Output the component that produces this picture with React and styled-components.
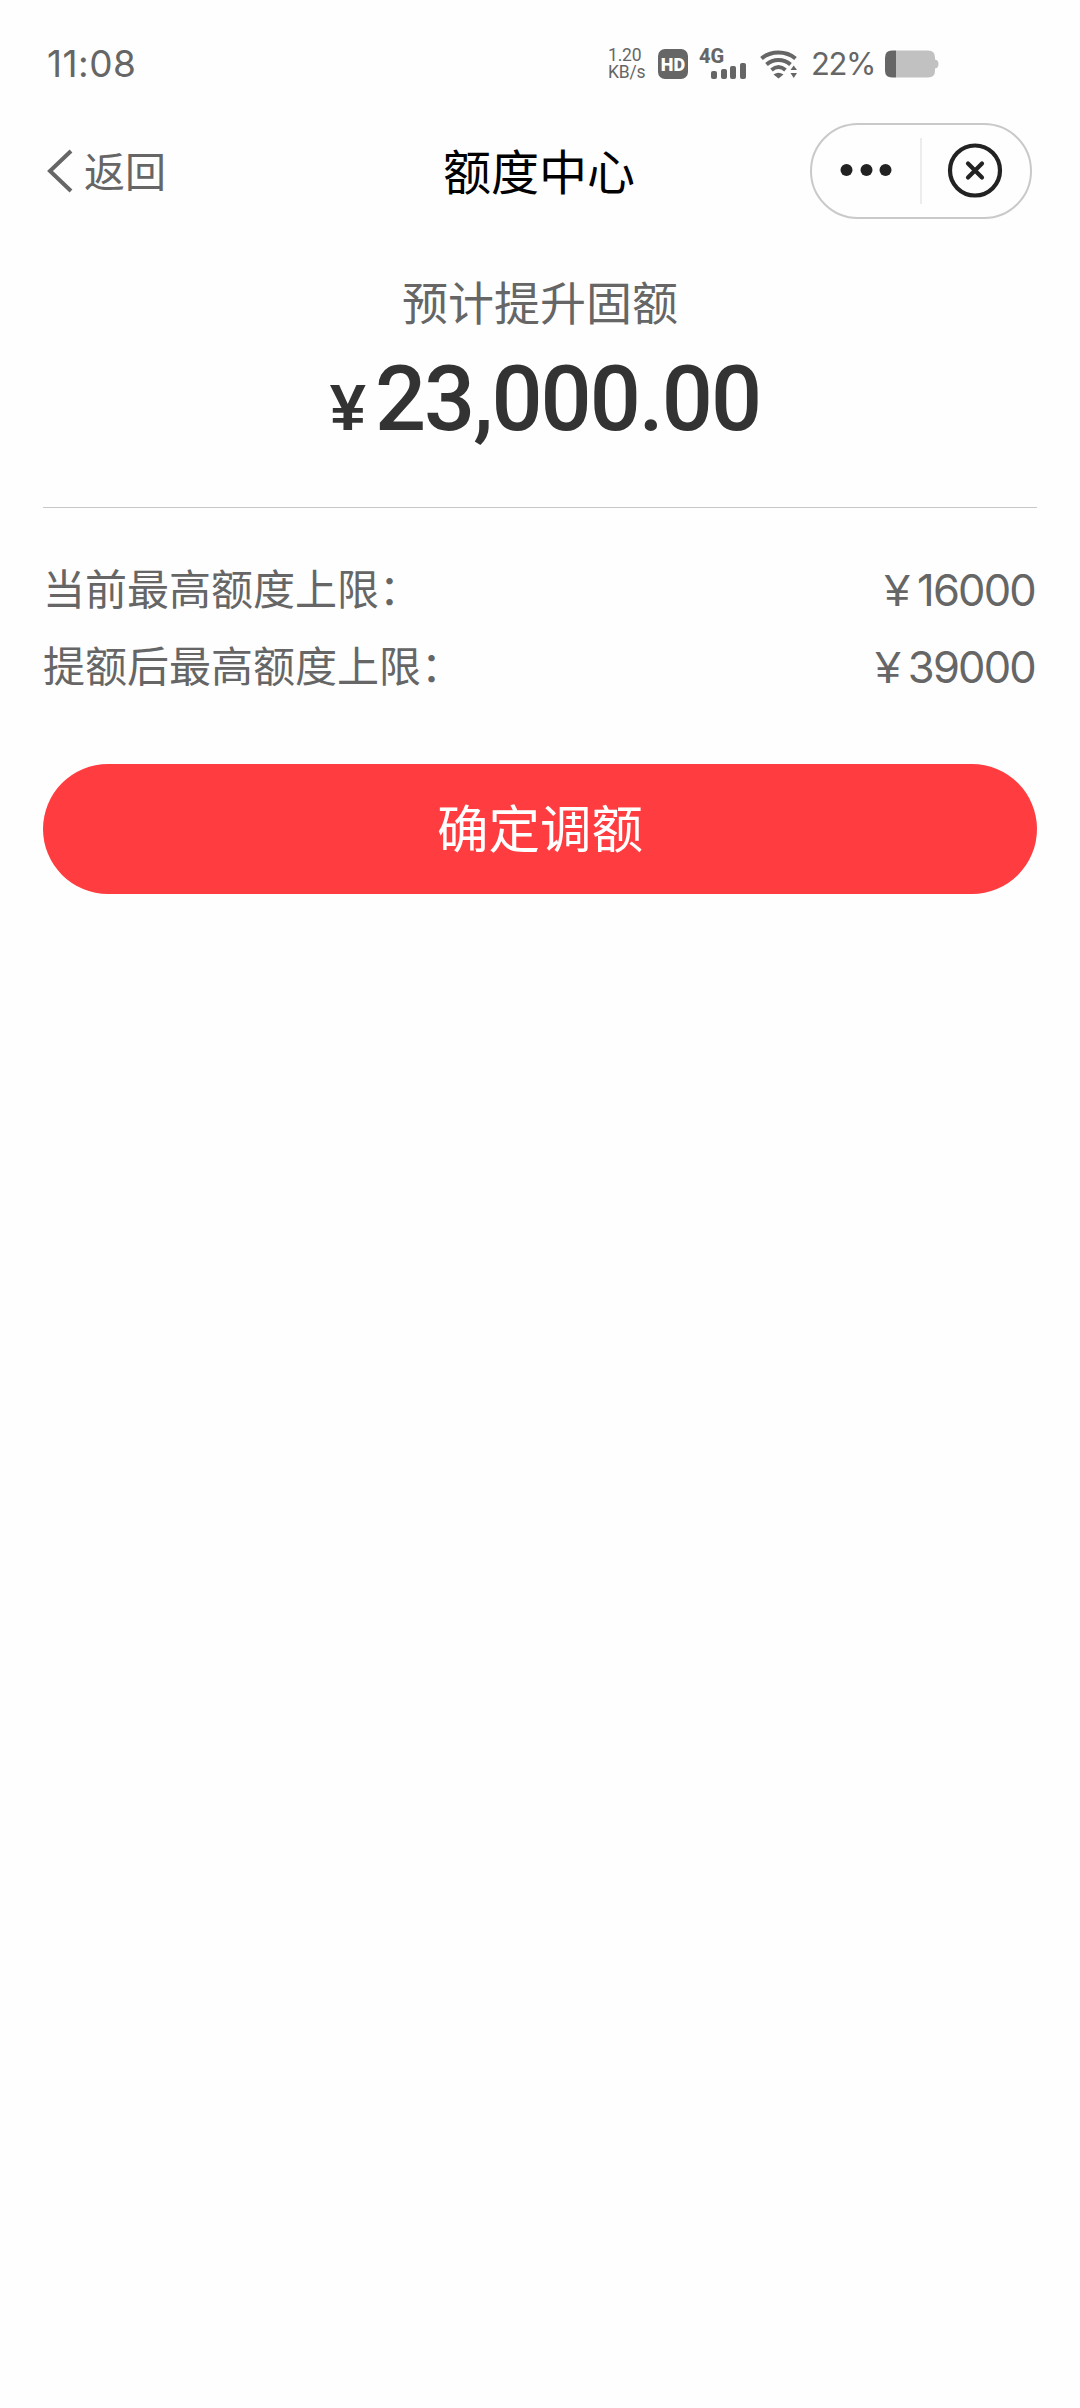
import React from 'react';
import styled, { createGlobalStyle } from 'styled-components';

const GlobalStyle = createGlobalStyle`
  * {
    box-sizing: border-box;
  }

  body {
    margin: 0;
    background: #fefefe;
    color: #666;
    font-family: Roboto, 'Noto Sans CJK SC', sans-serif;
  }
`;

const Screen = styled.div`
  width: 1080px;
  min-height: 2408px;
  background: #fefefe;
`;

const StatusBar = styled.div`
  display: flex;
  align-items: center;
  justify-content: space-between;
  height: 112px;
  padding: 16px 141px 0 47px;
`;

const Clock = styled.div`
  font-family: Inter, sans-serif;
  font-size: 37px;
  letter-spacing: 0.5px;
  line-height: 40px;
`;

const StatusIcons = styled.div`
  display: flex;
  align-items: center;
`;

const NetSpeed = styled.div`
  width: 50px;
  font-size: 17.5px;
  line-height: 17px;
  letter-spacing: -0.2px;
  white-space: nowrap;
`;

const HdBadge = styled.div`
  width: 30px;
  height: 30px;
  margin-right: 11px;
  border-radius: 7px;
  background: #666;
  color: #fff;
  font-size: 18px;
  font-weight: 900;
  line-height: 31px;
  text-align: center;
`;

const Signal = styled.div`
  display: flex;
  flex-direction: column;
  width: 61px;
  height: 30px;
  font-size: 20px;
  font-weight: 800;
  line-height: 14px;
`;

const SignalBars = styled.svg`
  width: 36px;
  height: 16px;
  margin: 0 0 0 12px;
`;

const WifiIcon = styled.svg`
  width: 37px;
  height: 30px;
  margin-right: 14px;
`;

const Percent = styled.div`
  width: 74px;
  font-family: Inter, sans-serif;
  font-size: 31px;
  letter-spacing: -1.4px;
  line-height: 36px;
`;

const BatteryIcon = styled.svg`
  width: 54px;
  height: 28px;
`;

const NavBar = styled.header`
  display: grid;
  grid-template-columns: 300px 1fr 300px;
  align-items: center;
  height: 118px;
  padding: 0 48px 0 46px;
`;

const BackButton = styled.div`
  display: flex;
  align-items: center;
  font-size: 41px;
  line-height: 60px;
`;

const BackArrow = styled.svg`
  width: 28px;
  height: 44px;
  margin-right: 10px;
`;

const BackLabel = styled.span`
  padding-top: 4px;
`;

const Title = styled.h1`
  margin: 0;
  padding-top: 5px;
  color: #000;
  font-size: 48px;
  font-weight: 400;
  line-height: 70px;
  text-align: center;
`;

const Capsule = styled.div`
  display: flex;
  align-items: center;
  justify-self: end;
  width: 222px;
  height: 96px;
  border: 2px solid #c9c9c9;
  border-radius: 48px;
`;

const CapsuleIcon = styled.svg`
  flex: 1;
  height: 92px;
`;

const CapsuleDivider = styled.div`
  width: 2px;
  height: 66px;
  background: #ececec;
`;

const Content = styled.main`
  padding: 0 43px;
`;

const Summary = styled.section`
  height: 278px;
  padding-top: 40px;
  border-bottom: 1px solid #c8c8c8;
  text-align: center;
`;

const SummaryLabel = styled.div`
  font-size: 46px;
  line-height: 68px;
`;

const Amount = styled.div`
  display: flex;
  align-items: baseline;
  justify-content: center;
  margin-top: 9px;
  padding-left: 10px;
  color: #333;
  font-size: 90px;
  font-weight: 500;
  letter-spacing: -2px;
  line-height: 106px;
`;

const AmountSign = styled.span`
  margin-right: 11px;
  font-family: 'Liberation Sans', sans-serif;
  font-size: 65px;
  font-weight: 700;
`;

const Limits = styled.section`
  padding-top: 44px;
`;

const LimitRow = styled.div`
  display: flex;
  align-items: center;
  justify-content: space-between;
  height: 77px;
  font-size: 42px;
  line-height: 77px;
`;

const LimitValue = styled.span`
  padding-right: 2px;
  font-family: Inter, sans-serif;
  font-size: 43.5px;
  letter-spacing: -1.8px;
`;

const LimitSign = styled.span`
  margin-right: 9px;
  font-family: 'Liberation Sans', sans-serif;
  font-size: 45px;
`;

const ConfirmButton = styled.button`
  display: block;
  width: 994px;
  height: 130px;
  margin-top: 58px;
  padding: 3px 0 0;
  border: 0;
  border-radius: 65px;
  background: #ff3d40;
  color: #fff;
  font-family: inherit;
  font-size: 51.5px;
  line-height: 127px;
`;

const limits = [
  { label: '当前最高额度上限：', value: '16000' },
  { label: '提额后最高额度上限：', value: '39000' },
];

const Status = () => (
  <StatusBar>
    <Clock>11:08</Clock>
    <StatusIcons>
      <NetSpeed>
        1.20
        <br />
        KB/s
      </NetSpeed>
      <HdBadge>HD</HdBadge>
      <Signal>
        4G
        <SignalBars viewBox="0 0 36 16" fill="#666">
          <rect x="0" y="8" width="6" height="8" rx="2" />
          <rect x="10" y="6" width="6" height="10" rx="2" />
          <rect x="19" y="3" width="6" height="13" rx="2" />
          <rect x="29" y="0" width="6" height="16" rx="2" />
        </SignalBars>
      </Signal>
      <WifiIcon viewBox="0 0 37 30" fill="none" stroke="#666" strokeWidth="4">
        <path d="M1.5 9.5C11 1.500 26 1.500 35.500 9.500" />
        <path d="M6.500 15.500C13.500 9.500 23.500 9.500 30.500 15.500" />
        <path d="M11.500 21C16 17.200 21 17.200 25.500 21" />
        <path d="M13.500 25.500Q18.500 22 23.500 25.500L18.500 29.500Z" fill="#666" stroke="none" />
        <path d="M30.500 21L33.700 16.500L37 21ZM30.500 24L33.700 29L37 24Z" fill="#666" stroke="none" />
      </WifiIcon>
      <Percent>22%</Percent>
      <BatteryIcon viewBox="0 0 54 28">
        <path d="M11 0.500H43Q50 0.500 50 7.500V9.500Q53.500 10 53.500 14T50 18.500V20.500Q50 27.500 43 27.500H11Z" fill="#c1c1c1" />
        <path d="M11 0.500H7Q0 0.500 0 7.500V20.500Q0 27.500 7 27.500H11Z" fill="#666" />
      </BatteryIcon>
    </StatusIcons>
  </StatusBar>
);

const Nav = () => (
  <NavBar>
    <BackButton>
      <BackArrow viewBox="0 0 28 44" fill="none" stroke="#666" strokeWidth="4">
        <path d="M25 2L4 22L25 42" />
      </BackArrow>
      <BackLabel>返回</BackLabel>
    </BackButton>
    <Title>额度中心</Title>
    <Capsule>
      <CapsuleIcon viewBox="0 0 108 92" fill="#222">
        <circle cx="34.500" cy="45" r="6" />
        <circle cx="54.500" cy="45" r="6" />
        <circle cx="73.500" cy="45" r="6" />
      </CapsuleIcon>
      <CapsuleDivider />
      <CapsuleIcon viewBox="0 0 108 92" fill="none" stroke="#222" strokeWidth="4.200" strokeLinecap="round">
        <circle cx="53" cy="45.500" r="25" />
        <path d="M46 38.500L60 52.500M60 38.500L46 52.500" />
      </CapsuleIcon>
    </Capsule>
  </NavBar>
);

const App = () => (
  <>
    <GlobalStyle />
    <Screen>
      <Status />
      <Nav />
      <Content>
        <Summary>
          <SummaryLabel>预计提升固额</SummaryLabel>
          <Amount>
            <AmountSign>¥</AmountSign>
            23,000.00
          </Amount>
        </Summary>
        <Limits>
          {limits.map(({ label, value }) => (
            <LimitRow key={label}>
              <span>{label}</span>
              <LimitValue>
                <LimitSign>¥</LimitSign>
                {value}
              </LimitValue>
            </LimitRow>
          ))}
        </Limits>
        <ConfirmButton>确定调额</ConfirmButton>
      </Content>
    </Screen>
  </>
);

export default App;
